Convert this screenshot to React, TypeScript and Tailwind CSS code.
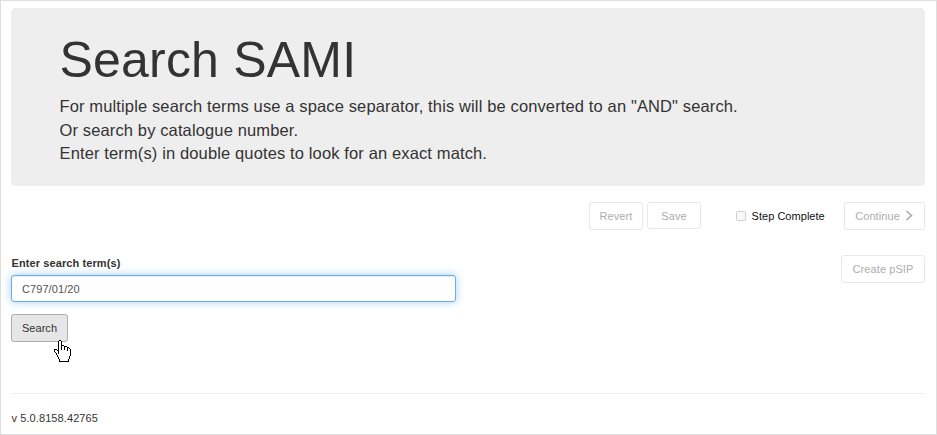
import React from "react";

const HAND = [
  ".....##..........",
  "....#oo#.........",
  "....#oo#.........",
  "....#oo#.........",
  "....#oo#.........",
  "....#oo###.......",
  "....#oo#oo###....",
  "....#oo#oo#oo##..",
  "....#oo#oo#oo#o#.",
  "###.#oo#oo#oo#oo#",
  "#oo##oooooooo#oo#",
  "#ooo#ooooooooooo#",
  ".#oo#ooooooooooo#",
  "..#o#ooooooooooo#",
  "..#ooooooooooooo#",
  "...#oooooooooooo#",
  "...#ooooooooooo#.",
  "....#oooooooooo#.",
  "....#oooooooooo#.",
  ".....#oooooooo#..",
  ".....#oooooooo#..",
  ".....##########..",
];

function HandPointer() {
  return (
    <svg
      className="pointer-events-none absolute left-[43px] top-[26px]"
      width="17"
      height="22"
      viewBox="0 0 17 22"
      shapeRendering="crispEdges"
    >
      {HAND.flatMap((row, y) =>
        row.split("").map((c, x) =>
          c === "." ? null : (
            <rect key={`${x}-${y}`} x={x} y={y} width="1" height="1" fill={c === "#" ? "#000" : "#fff"} />
          )
        )
      )}
    </svg>
  );
}

function DisabledButton({ className, children }: { className: string; children: React.ReactNode }) {
  return (
    <button
      disabled
      className={`flex items-center justify-center rounded-[3px] border border-[#e8e8e8] bg-white tracking-[0.08px] text-[#adadad] ${className}`}
    >
      {children}
    </button>
  );
}

export default function App() {
  return (
    <div className="h-[435px] w-[937px] border border-[#dedede] bg-white pl-[10px] pr-[11px] pt-[7px] font-['Liberation_Sans',Arial,sans-serif] text-[11px] leading-[16px] text-[#333]">
      <header className="h-[178px] rounded-[5px] bg-[#eee] pl-[48.5px] pt-[25px]">
        <h1 className="text-[50px] leading-[55px] tracking-[0.2px]">Search SAMI</h1>
        <p className="mt-[7px] text-[16.5px] leading-[23.57px] tracking-[0.13px]">
          For multiple search terms use a space separator, this will be converted to an "AND" search.
          <br />
          Or search by catalogue number.
          <br />
          Enter term(s) in double quotes to look for an exact match.
        </p>
      </header>

      <div className="mt-[16px] flex h-[28px] items-start justify-end">
        <DisabledButton className="h-[28px] w-[54px]">Revert</DisabledButton>
        <DisabledButton className="ml-1 h-[27px] w-[54px]">Save</DisabledButton>
        <label className="ml-[35px] flex h-[28px] items-center text-[#111]">
          <input
            type="checkbox"
            disabled
            className="mr-[5.5px] size-[10px] appearance-none rounded-[2px] border border-[#d2d2d2] bg-[#f8f8f8]"
          />
          <span className="w-[74.5px] whitespace-nowrap tracking-[0.04px]">Step Complete</span>
        </label>
        <DisabledButton className="ml-[18px] h-[28px] w-[81px]">
          Continue
          <svg className="relative -top-px ml-[5px]" width="9" height="11" viewBox="0 0 9 11" fill="none">
            <path d="M1.5 1L6.5 5.5L1.5 10" stroke="#a8a8a8" strokeWidth="1.5" />
          </svg>
        </DisabledButton>
      </div>

      <main className="mt-[25px] flex h-[139px] items-start justify-between border-b border-[#eee]">
        <div>
          <label className="block h-[20px] pl-[0.5px] font-bold tracking-[0.1px]" htmlFor="term">
            Enter search term(s)
          </label>
          <input
            id="term"
            type="text"
            defaultValue="C797/01/20"
            className="block h-[27px] w-[445px] rounded-[3px] border border-[#66afe9] bg-white px-[10px] tracking-[0.08px] text-[#555] shadow-[inset_0_1px_1px_rgba(0,0,0,0.075),0_0_8px_rgba(102,175,233,0.6)] outline-none"
          />
          <div className="relative mt-3 w-[57px]">
            <button className="h-[28px] w-[57px] rounded-[3px] border border-[#adadad] bg-[#e6e6e6] tracking-[0.04px]">
              Search
            </button>
            <HandPointer />
          </div>
        </div>
        <DisabledButton className="h-[28px] w-[84px]">Create pSIP</DisabledButton>
      </main>

      <footer className="mt-[16px] pl-[0.5px] tracking-[0.09px]">v 5.0.8158.42765</footer>
    </div>
  );
}
